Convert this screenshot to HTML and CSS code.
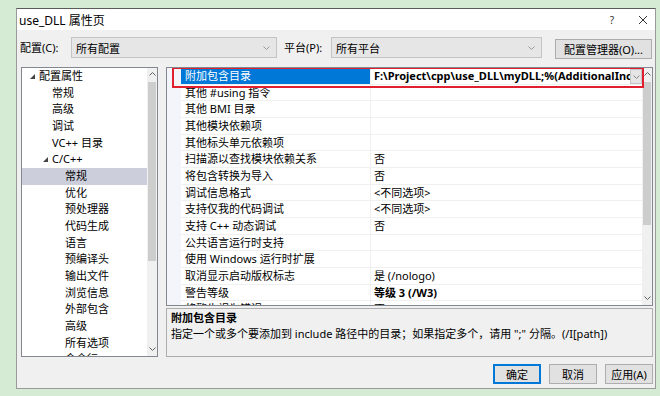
FILE: index.html
```html
<!DOCTYPE html>
<html lang="zh-CN">

<head>
    <meta charset="UTF-8">
    <title>use_DLL 属性页</title>
    <link rel="stylesheet" href="styles.css">
</head>

<body>
    <div class="dialog">
        <div class="titlebar">
            <span class="title">use_DLL 属性页</span>
            <span class="help">?</span>
            <span class="close">
                <svg width="10" height="10" viewBox="0 0 10 10"><path d="M1 1L9 9M9 1L1 9" stroke="#333" stroke-width="1" fill="none"/></svg>
            </span>
        </div>

        <div class="toolbar">
            <span class="label label-config">配置(C):</span>
            <div class="combo combo-config">
                <span>所有配置</span>
                <svg class="chev" width="7" height="4" viewBox="0 0 7 4"><path d="M0.5 0.5L3.5 3.5L6.5 0.5" stroke="#999" fill="none"/></svg>
            </div>
            <span class="label label-platform">平台(P):</span>
            <div class="combo combo-platform">
                <span>所有平台</span>
                <svg class="chev" width="7" height="4" viewBox="0 0 7 4"><path d="M0.5 0.5L3.5 3.5L6.5 0.5" stroke="#999" fill="none"/></svg>
            </div>
            <button class="btn btn-manager">配置管理器(O)...</button>
        </div>

        <div class="content">
            <div class="tree">
                <ul class="items">
                    <li class="lvl0"><span class="twisty"><svg width="5" height="5" viewBox="0 0 5 5"><polygon points="5,0 5,5 0,5" fill="#444"/></svg></span>配置属性</li>
                    <li class="lvl1"><span class="twisty"></span>常规</li>
                    <li class="lvl1"><span class="twisty"></span>高级</li>
                    <li class="lvl1"><span class="twisty"></span>调试</li>
                    <li class="lvl1"><span class="twisty"></span>VC++ 目录</li>
                    <li class="lvl1"><span class="twisty"><svg width="5" height="5" viewBox="0 0 5 5"><polygon points="5,0 5,5 0,5" fill="#444"/></svg></span>C/C++</li>
                    <li class="lvl2 active"><span class="twisty"></span>常规</li>
                    <li class="lvl2"><span class="twisty"></span>优化</li>
                    <li class="lvl2"><span class="twisty"></span>预处理器</li>
                    <li class="lvl2"><span class="twisty"></span>代码生成</li>
                    <li class="lvl2"><span class="twisty"></span>语言</li>
                    <li class="lvl2"><span class="twisty"></span>预编译头</li>
                    <li class="lvl2"><span class="twisty"></span>输出文件</li>
                    <li class="lvl2"><span class="twisty"></span>浏览信息</li>
                    <li class="lvl2"><span class="twisty"></span>外部包含</li>
                    <li class="lvl2"><span class="twisty"></span>高级</li>
                    <li class="lvl2"><span class="twisty"></span>所有选项</li>
                    <li class="lvl2"><span class="twisty"></span>命令行</li>
                </ul>
                <div class="scrollbar tree-scroll">
                    <svg class="arrow" width="7" height="4" viewBox="0 0 7 4"><path d="M0.5 3.5L3.5 0.5L6.5 3.5" stroke="#606060" fill="none"/></svg>
                    <div class="thumb"></div>
                    <svg class="arrow arrow-down" width="7" height="4" viewBox="0 0 7 4"><path d="M0.5 0.5L3.5 3.5L6.5 0.5" stroke="#606060" fill="none"/></svg>
                </div>
            </div>

            <div class="right">
                <div class="grid">
                    <div class="gutter"></div>
                    <div class="rows">
                        <div class="row selected">
                            <div class="name">附加包含目录</div>
                            <div class="val">
                                <span class="val-text">F:\Project\cpp\use_DLL\myDLL;%(AdditionalIncludeDirectories)</span>
                                <span class="dropdown">
                                    <svg width="7" height="4" viewBox="0 0 7 4"><path d="M0.5 0.5L3.5 3.5L6.5 0.5" stroke="#888" fill="none"/></svg>
                                </span>
                            </div>
                        </div>
                        <div class="row"><div class="name">其他 #using 指令</div><div class="val"></div></div>
                        <div class="row"><div class="name">其他 BMI 目录</div><div class="val"></div></div>
                        <div class="row"><div class="name">其他模块依赖项</div><div class="val"></div></div>
                        <div class="row"><div class="name">其他标头单元依赖项</div><div class="val"></div></div>
                        <div class="row"><div class="name">扫描源以查找模块依赖关系</div><div class="val">否</div></div>
                        <div class="row"><div class="name">将包含转换为导入</div><div class="val">否</div></div>
                        <div class="row"><div class="name">调试信息格式</div><div class="val">&lt;不同选项&gt;</div></div>
                        <div class="row"><div class="name">支持仅我的代码调试</div><div class="val">&lt;不同选项&gt;</div></div>
                        <div class="row"><div class="name">支持 C++ 动态调试</div><div class="val">否</div></div>
                        <div class="row"><div class="name">公共语言运行时支持</div><div class="val"></div></div>
                        <div class="row"><div class="name">使用 Windows 运行时扩展</div><div class="val"></div></div>
                        <div class="row"><div class="name">取消显示启动版权标志</div><div class="val">是 (/nologo)</div></div>
                        <div class="row"><div class="name">警告等级</div><div class="val bold">等级 3 (/W3)</div></div>
                        <div class="row"><div class="name">将警告视为错误</div><div class="val">否 (/WX-)</div></div>
                    </div>
                    <div class="scrollbar grid-scroll">
                        <svg class="arrow" width="7" height="4" viewBox="0 0 7 4"><path d="M0.5 3.5L3.5 0.5L6.5 3.5" stroke="#606060" fill="none"/></svg>
                        <div class="thumb"></div>
                        <svg class="arrow arrow-down" width="7" height="4" viewBox="0 0 7 4"><path d="M0.5 0.5L3.5 3.5L6.5 0.5" stroke="#606060" fill="none"/></svg>
                    </div>
                    <div class="highlight"></div>
                </div>

                <div class="desc">
                    <h3>附加包含目录</h3>
                    <p>指定一个或多个要添加到 include 路径中的目录；如果指定多个，请用 ";" 分隔。(/I[path])</p>
                </div>
            </div>
        </div>

        <div class="buttons">
            <button class="btn btn-default">确定</button>
            <button class="btn">取消</button>
            <button class="btn">应用(A)</button>
        </div>
    </div>
</body>

</html>
```

FILE: styles.css
```css
* {
    margin: 0;
    padding: 0;
    box-sizing: border-box;
}

body {
    background-color: #d5ebd3;
    font-family: "Noto Sans", "Noto Sans CJK SC", sans-serif;
    font-size: 11px;
    color: #000;
}

.dialog {
    width: 640px;
    height: 381px;
    margin: 8px 0 0 16px;
    background-color: #f0f0f0;
    border: 1px solid #9a9a9a;
    border-top-color: #5a5a5a;

    display: flex;
    flex-direction: column;
}

/* title bar */
.titlebar {
    height: 21px;
    background-color: #fff;
    display: flex;
    align-items: center;
    padding-left: 2px;
}

.titlebar .title {
    font-size: 12px;
    flex: 1;
}

.titlebar .help {
    font-size: 10px;
    color: #333;
    margin-right: 24px;
}

.titlebar .close {
    display: flex;
    margin-right: 7px;
}

/* config row */
.toolbar {
    height: 37px;
    display: flex;
    align-items: flex-start;
    padding: 7px 0 0 3px;
}

.label {
    height: 21px;
    line-height: 21px;
}

.label-config {
    width: 51px;
}

.label-platform {
    width: 47px;
    margin-left: 7px;
}

.combo {
    height: 21px;
    background-color: #e6e6e6;
    border: 1px solid #c4c4c4;
    display: flex;
    align-items: center;
    justify-content: space-between;
    padding: 0 6px 0 4px;
}

.combo-config {
    width: 206px;
}

.combo-platform {
    width: 211px;
}

.btn {
    height: 20px;
    background-color: #e1e1e1;
    border: 1px solid #adadad;
    font: inherit;
    color: #000;
}

.btn-manager {
    width: 97px;
    height: 20px;
    margin: 2px 0 0 13px;
}

/* tree + grid */
.content {
    display: flex;
    gap: 8px;
    padding: 0 1px 0 4px;
    height: 290px;
}

.tree {
    width: 137px;
    height: 290px;
    background-color: #fff;
    border: 1px solid #828790;
    display: flex;
    overflow: hidden;
}

.tree .items {
    flex: 1;
    list-style: none;
}

.tree li {
    height: 16.67px;
    line-height: 16.67px;
    display: flex;
    align-items: center;
    white-space: nowrap;
}

.tree li.active {
    background-color: #cccedb;
}

.twisty {
    width: 9px;
    display: flex;
    align-items: center;
}

.lvl0 {
    padding-left: 8px;
}

.lvl1 {
    padding-left: 21px;
}

.lvl2 {
    padding-left: 34px;
}

.scrollbar {
    width: 10px;
    background-color: #f0f0f0;
    display: flex;
    flex-direction: column;
    align-items: center;
    padding: 4px 0 5px;
}

.scrollbar .thumb {
    width: 8px;
    background-color: #cdcdcd;
    margin-top: 6px;
}

.tree-scroll .thumb {
    height: 179px;
}

.grid-scroll .thumb {
    height: 143px;
}

.scrollbar .arrow-down {
    margin-top: auto;
}

.right {
    width: 487px;
    display: flex;
    flex-direction: column;
    gap: 2px;
}

.grid {
    position: relative;
    height: 239px;
    background-color: #fff;
    border: 1px solid #828790;
    display: flex;
    overflow: hidden;
}

.gutter {
    width: 14px;
    background-color: #f3f5fa;
}

.rows {
    width: 462px;
    overflow: hidden;
}

.row {
    height: 16.67px;
    display: flex;
    border-bottom: 1px solid #f0f0f0;
    white-space: nowrap;
}

.row .name {
    width: 189px;
    padding-left: 4px;
    line-height: 16px;
}

.row .val {
    flex: 1;
    padding-left: 3px;
    border-left: 1px solid #f0f0f0;
    line-height: 16px;
    overflow: hidden;
    display: flex;
}

.row .val.bold,
.row.selected .val-text {
    font-weight: bold;
}

.row.selected .name {
    background-color: #0078d7;
    color: #fff;
}

.row.selected .val-text {
    flex: 1;
    overflow: hidden;
}

.dropdown {
    width: 12px;
    height: 15px;
    margin-top: 1px;
    background-color: #e5e5e5;
    border: 1px solid #c4c4c4;
    display: flex;
    align-items: center;
    justify-content: center;
}

/* red marker drawn over the first row */
.highlight {
    position: absolute;
    left: 5px;
    top: -1px;
    width: 472px;
    height: 21px;
    border: 2px solid #e0202e;
}

.desc {
    height: 49px;
    border: 1px solid #adadad;
    padding: 1px 4px;
}

.desc h3 {
    font-size: 11px;
    line-height: 16px;
}

.desc p {
    line-height: 16px;
}

/* footer buttons */
.buttons {
    display: flex;
    justify-content: flex-end;
    gap: 8px;
    padding: 7px 2px 0 0;
}

.buttons .btn {
    width: 48px;
}

.btn-default {
    border: 1px solid #0078d7;
    box-shadow: inset 0 0 0 1px #0078d7;
}
```
